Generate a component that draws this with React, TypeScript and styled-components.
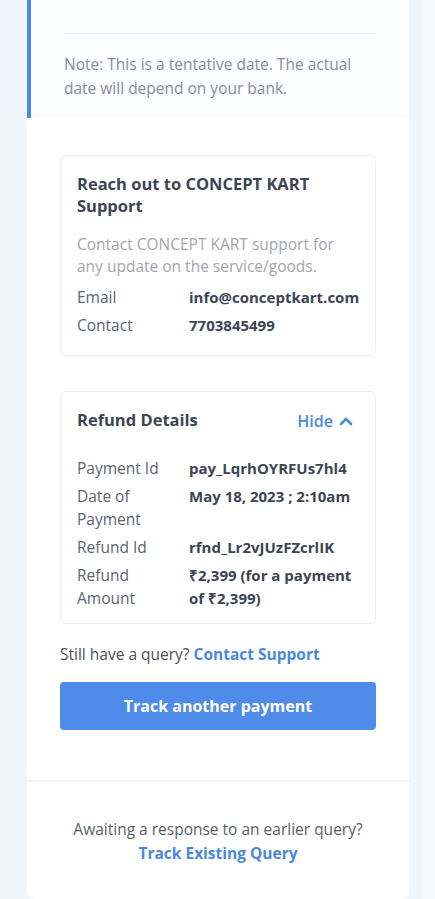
import React from "react";
import styled, { createGlobalStyle } from "styled-components";

const Global = createGlobalStyle`
  html, body { margin: 0; padding: 0; background: #f1f5fc; }
  body { font-family: "Open Sans", "Liberation Sans", sans-serif; -webkit-font-smoothing: antialiased; }
  * { box-sizing: border-box; }
`;

const Page = styled.div`
  display: flex;
  padding: 0 26px 3px 27px;
  min-height: 899px;
  background: linear-gradient(to right, #f1f5fc 0, #f1f5fc 423px, #f5f8fd 423px);
`;

const Card = styled.div`
  flex: 1;
  background: #ffffff;
  border-radius: 0 0 8px 8px;
  display: flex;
  flex-direction: column;
  overflow: hidden;
`;

const NoteSection = styled.div`
  background: #fbfcfe;
  border-left: 4px solid #4f8ae6;
  padding: 33px 33px 18px 33px;
`;

const Divider = styled.div`
  height: 1px;
  background: #eef0f4;
  margin-bottom: 18px;
`;

const Note = styled.p`
  margin: 0;
  font-size: 15.5px;
  line-height: 24px;
  color: #8a8d96;
`;

const Main = styled.div`
  padding: 37px 33px 50px 33px;
  display: flex;
  flex-direction: column;
`;

const Box = styled.div<{ $mt?: number; $pb?: number }>`
  border: 1px solid #eceef2;
  border-radius: 6px;
  padding: 17px 16px ${(p) => p.$pb ?? 18}px 16px;
  margin-top: ${(p) => p.$mt ?? 0}px;
`;

const BoxHead = styled.div`
  display: flex;
  justify-content: space-between;
  align-items: flex-start;
`;

const Title = styled.h3`
  margin: 0;
  font-size: 16.5px;
  line-height: 22px;
  font-weight: 700;
  color: #3d4454;
`;

const HideBtn = styled.span`
  display: flex;
  align-items: center;
  gap: 6px;
  margin-top: 1px;
  margin-right: 6px;
  font-size: 16px;
  line-height: 22px;
  font-weight: 600;
  color: #4a88de;
`;

const Desc = styled.p`
  margin: 16px 0 9px 0;
  font-size: 15.5px;
  line-height: 22px;
  color: #a2a5ad;
`;

const Rows = styled.div<{ $mt?: number }>`
  display: grid;
  grid-template-columns: 112px 1fr;
  row-gap: 5px;
  margin-top: ${(p) => p.$mt ?? 0}px;
`;

const Label = styled.div`
  font-size: 15.5px;
  line-height: 23px;
  color: #5d6370;
`;

const Value = styled.div`
  font-size: 15px;
  line-height: 23px;
  font-weight: 700;
  color: #3d4454;
`;

const Query = styled.p`
  margin: 19px 0 0 0;
  font-size: 15.5px;
  line-height: 22px;
  color: #4b505b;
`;

const Link = styled.span`
  font-weight: 700;
  color: #4a88de;
`;

const Button = styled.button`
  margin-top: 17px;
  height: 48px;
  border: none;
  border-radius: 4px;
  background: #4f8be9;
  color: #ffffff;
  font-family: inherit;
  font-size: 16px;
  font-weight: 700;
`;

const Footer = styled.div`
  border-top: 2px solid #f1f3f7;
  padding: 35px 20px 34px;
  text-align: center;
  font-size: 15.5px;
  line-height: 24px;
  color: #5a5e67;
`;

const FooterLink = styled.div`
  font-weight: 700;
  color: #4a88de;
`;

const ChevronUp = () => (
  <svg width="14" height="10" viewBox="0 0 14 10" fill="none">
    <path d="M2 8 L7 3 L12 8" stroke="#4a88de" strokeWidth="2.6" strokeLinecap="round" strokeLinejoin="round" />
  </svg>
);

export default function App() {
  return (
    <>
      <Global />
      <Page>
        <Card>
          <NoteSection>
            <Divider />
            <Note>Note: This is a tentative date. The actual date will depend on your bank.</Note>
          </NoteSection>
          <Main>
            <Box>
              <Title>Reach out to CONCEPT KART Support</Title>
              <Desc>Contact CONCEPT KART support for any update on the service/goods.</Desc>
              <Rows>
                <Label>Email</Label>
                <Value>info@conceptkart.com</Value>
                <Label>Contact</Label>
                <Value>7703845499</Value>
              </Rows>
            </Box>
            <Box $mt={35} $pb={13}>
              <BoxHead>
                <Title>Refund Details</Title>
                <HideBtn>
                  Hide <ChevronUp />
                </HideBtn>
              </BoxHead>
              <Rows $mt={25}>
                <Label>Payment Id</Label>
                <Value>pay_LqrhOYRFUs7hl4</Value>
                <Label>Date of Payment</Label>
                <Value>May 18, 2023 ; 2:10am</Value>
                <Label>Refund Id</Label>
                <Value>rfnd_Lr2vJUzFZcrlIK</Value>
                <Label>Refund Amount</Label>
                <Value>₹2,399 (for a payment of ₹2,399)</Value>
              </Rows>
            </Box>
            <Query>
              Still have a query? <Link>Contact Support</Link>
            </Query>
            <Button>Track another payment</Button>
          </Main>
          <Footer>
            Awaiting a response to an earlier query?
            <FooterLink>Track Existing Query</FooterLink>
          </Footer>
        </Card>
      </Page>
    </>
  );
}
